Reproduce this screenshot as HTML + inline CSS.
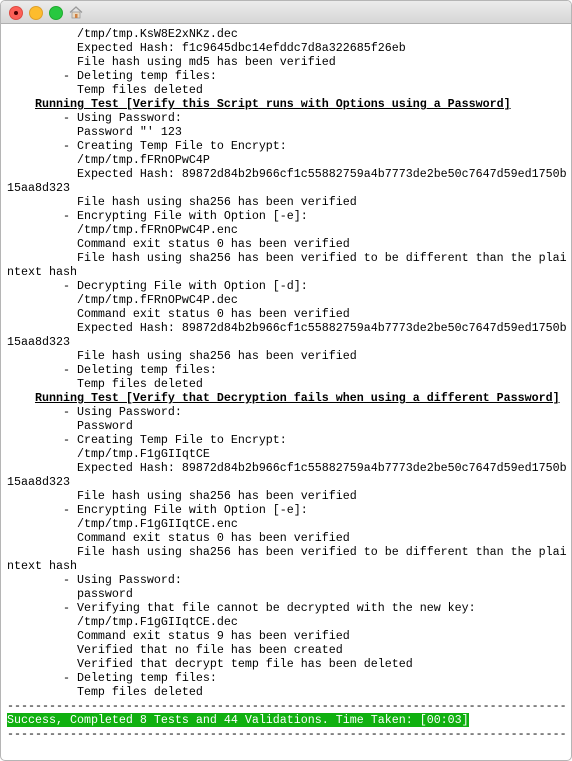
<!DOCTYPE html>
<html><head><style>
html,body{margin:0;padding:0;background:#fff;}
body{width:572px;height:761px;position:relative;overflow:hidden;}
.win{position:absolute;left:0;top:0;width:570px;height:759px;border:1px solid #b5b5b5;border-radius:5px;overflow:hidden;background:#fff;}
.tb{position:absolute;left:0;top:0;width:100%;height:22px;background:linear-gradient(#ececec,#d6d6d6);border-bottom:1px solid #b0b0b0;}
.d{position:absolute;top:5px;width:12px;height:12px;border-radius:50%;}
pre{position:absolute;left:6px;top:26px;margin:0;font-family:"Liberation Mono",monospace;font-size:11.67px;line-height:14px;color:#000;}
b{text-decoration:underline;}
.g{background:#10b010;color:#fff;}
</style></head><body><div class="win">
<div class="tb">
<div class="d" style="left:8px;background:#fc5f57;border:0.5px solid #de4a41"><div style="position:absolute;left:4px;top:4px;width:4px;height:4px;border-radius:50%;background:#4c0002"></div></div>
<div class="d" style="left:28px;background:#fdbc2e;border:0.5px solid #dea02a"></div>
<div class="d" style="left:48px;background:#28c840;border:0.5px solid #1faa2f"></div>
<svg style="position:absolute;left:68px;top:4px" width="14" height="14" viewBox="0 0 14 14"><path d="M1 7.5L7 2l6 5.5" fill="none" stroke="#999" stroke-width="1.2"/><rect x="3" y="7" width="8" height="6" fill="#e8d8c0" stroke="#999" stroke-width="0.8"/><rect x="6" y="9" width="2.5" height="4" fill="#d08040"/></svg>
</div>
<pre>          /tmp/tmp.KsW8E2xNKz.dec
          Expected Hash: f1c9645dbc14efddc7d8a322685f26eb
          File hash using md5 has been verified
        - Deleting temp files:
          Temp files deleted
    <b>Running Test [Verify this Script runs with Options using a Password]</b>
        - Using Password:
          Password "' 123
        - Creating Temp File to Encrypt:
          /tmp/tmp.fFRnOPwC4P
          Expected Hash: 89872d84b2b966cf1c55882759a4b7773de2be50c7647d59ed1750b
15aa8d323
          File hash using sha256 has been verified
        - Encrypting File with Option [-e]:
          /tmp/tmp.fFRnOPwC4P.enc
          Command exit status 0 has been verified
          File hash using sha256 has been verified to be different than the plai
ntext hash
        - Decrypting File with Option [-d]:
          /tmp/tmp.fFRnOPwC4P.dec
          Command exit status 0 has been verified
          Expected Hash: 89872d84b2b966cf1c55882759a4b7773de2be50c7647d59ed1750b
15aa8d323
          File hash using sha256 has been verified
        - Deleting temp files:
          Temp files deleted
    <b>Running Test [Verify that Decryption fails when using a different Password]</b>
        - Using Password:
          Password
        - Creating Temp File to Encrypt:
          /tmp/tmp.F1gGIIqtCE
          Expected Hash: 89872d84b2b966cf1c55882759a4b7773de2be50c7647d59ed1750b
15aa8d323
          File hash using sha256 has been verified
        - Encrypting File with Option [-e]:
          /tmp/tmp.F1gGIIqtCE.enc
          Command exit status 0 has been verified
          File hash using sha256 has been verified to be different than the plai
ntext hash
        - Using Password:
          password
        - Verifying that file cannot be decrypted with the new key:
          /tmp/tmp.F1gGIIqtCE.dec
          Command exit status 9 has been verified
          Verified that no file has been created
          Verified that decrypt temp file has been deleted
        - Deleting temp files:
          Temp files deleted
--------------------------------------------------------------------------------
<span class="g">Success, Completed 8 Tests and 44 Validations. Time Taken: [00:03]</span>
--------------------------------------------------------------------------------</pre>
</div></body></html>
